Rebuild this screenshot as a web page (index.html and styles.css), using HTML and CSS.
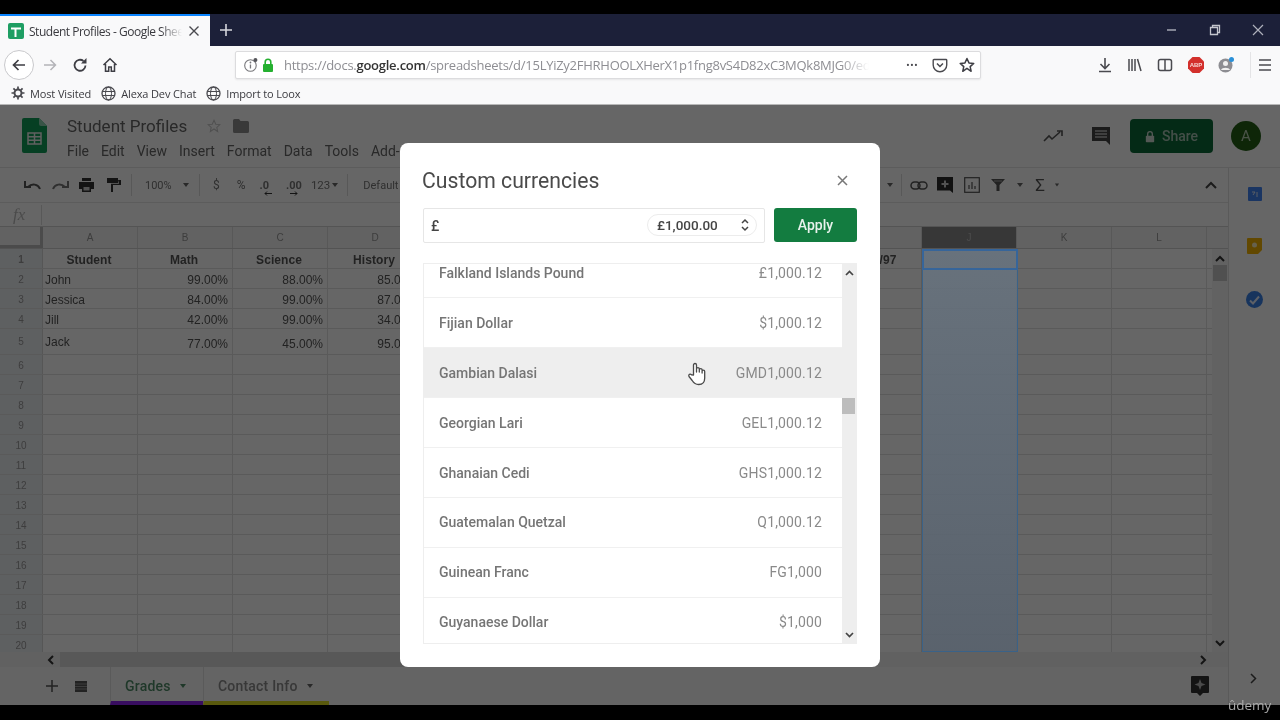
FILE: index.html
```html
<!DOCTYPE html>
<html lang="en">
<head>
<meta charset="utf-8">
<title>Student Profiles - Google Sheets</title>
<link rel="stylesheet" href="styles.css">
</head>
<body>
<div class="frame">
  <div class="letterbox-top"></div>

  <div class="tabstrip">
    <div class="tab">
      <svg class="favicon" width="16" height="16" viewBox="0 0 16 16"><rect width="16" height="16" rx="2" fill="#1e9e63"/><path d="M3 5.5h10M7.5 5.5V14" stroke="#fff" stroke-width="2" fill="none"/></svg>
      <span class="tab-title">Student Profiles - Google Sheets</span>
      <svg class="tab-close" width="12" height="12" viewBox="0 0 12 12"><path d="M1.5 1.5l9 9M10.5 1.5l-9 9" stroke="#4a4a4f" stroke-width="1.4"/></svg>
    </div>
    <svg class="newtab" width="14" height="14" viewBox="0 0 14 14"><path d="M7 1v12M1 7h12" stroke="#d5d6dc" stroke-width="1.6"/></svg>
    <div class="winctrls">
      <svg width="12" height="12" viewBox="0 0 12 12"><path d="M1 6h9" stroke="#aeb0bb" stroke-width="1.4"/></svg>
      <svg width="12" height="12" viewBox="0 0 12 12"><path d="M1.5 3.5h7v7h-7zM3.5 3.5v-2h7v7h-2" fill="none" stroke="#c4c5cd" stroke-width="1.3"/></svg>
      <svg width="12" height="12" viewBox="0 0 12 12"><path d="M1 1l10 10M11 1L1 11" stroke="#aeb0bb" stroke-width="1.2"/></svg>
    </div>
  </div>

  <div class="navbar">
    <div class="backbtn"><svg width="16" height="16" viewBox="0 0 16 16"><path d="M14 8H2.5M7.5 3L2.5 8l5 5" fill="none" stroke="#3e3e44" stroke-width="1.7"/></svg></div>
    <svg class="nav-fwd" width="16" height="16" viewBox="0 0 16 16"><path d="M2 8h11.5M8.5 3l5 5-5 5" fill="none" stroke="#b4b4b8" stroke-width="1.5"/></svg>
    <svg class="nav-reload" width="16" height="16" viewBox="0 0 16 16"><path d="M13.5 8.5A5.5 5.5 0 1 1 11.5 4" fill="none" stroke="#3e3e44" stroke-width="1.8"/><path d="M14.5 1v5.5H9z" fill="#3e3e44"/></svg>
    <svg class="nav-home" width="16" height="16" viewBox="0 0 16 16"><path d="M1.5 8L8 1.8 14.5 8M3.5 7v7.2h3.2V10h2.6v4.2h3.2V7" fill="none" stroke="#3e3e44" stroke-width="1.5"/></svg>
    <div class="urlbar">
      <svg width="16" height="16" viewBox="0 0 16 16"><circle cx="7.5" cy="8.5" r="5.8" fill="none" stroke="#77777b" stroke-width="1.1"/><path d="M7.5 7.5v4" stroke="#77777b" stroke-width="1.3"/><circle cx="7.5" cy="5.5" r=".9" fill="#77777b"/><circle cx="12.5" cy="3" r="2" fill="#55555a"/></svg>
      <svg class="lock" width="12" height="14" viewBox="0 0 12 14"><rect x="1" y="6" width="10" height="8" rx="1" fill="#25b030"/><path d="M3.2 6.5V4a2.8 2.8 0 0 1 5.6 0v2.5" fill="none" stroke="#25b030" stroke-width="1.6"/></svg>
      <div class="url"><span>https://docs.</span><b>google.com</b><span>/spreadsheets/d/15LYiZy2FHRHOOLXHerX1p1fng8vS4D82xC3MQk8MJG0/edit</span></div>
      <span class="dots">•••</span>
      <svg class="pocket" width="16" height="16" viewBox="0 0 16 16"><path d="M2 2.5h12a.8.8 0 0 1 .8.8V8A6.8 6.8 0 0 1 1.2 8V3.3A.8.8 0 0 1 2 2.5z" fill="none" stroke="#4a4a4f" stroke-width="1.4"/><path d="M5 6.5l3 3 3-3" fill="none" stroke="#4a4a4f" stroke-width="1.6"/></svg>
      <svg class="star" width="16" height="16" viewBox="0 0 16 16"><path d="M8 1.5l2 4.4 4.8.5-3.6 3.2 1 4.7L8 11.4l-4.2 2.9 1-4.7L1.2 6.4 6 5.9z" fill="none" stroke="#3e3e44" stroke-width="1.5" stroke-linejoin="round"/></svg>
    </div>
    <div class="nav-right">
      <svg width="16" height="16" viewBox="0 0 16 16"><path d="M8 1v10M3.5 7L8 11.5 12.5 7M2 14.5h12" fill="none" stroke="#4a4a4f" stroke-width="1.6"/></svg>
      <svg width="16" height="16" viewBox="0 0 16 16"><path d="M2 2v12M5 2v12M8 2v12M10.5 2l3.5 12" fill="none" stroke="#4a4a4f" stroke-width="1.5"/></svg>
      <svg width="16" height="16" viewBox="0 0 16 16"><rect x="1.5" y="2.5" width="13" height="11" rx="2" fill="none" stroke="#4a4a4f" stroke-width="1.5"/><path d="M8 3v10" stroke="#4a4a4f" stroke-width="1.5"/></svg>
      <svg width="18" height="18" viewBox="0 0 18 18"><path d="M5.5 1h7L17 5.5v7L12.500 17h-7L1 12.500v-7z" fill="#d3302c"/><text x="9" y="11" text-anchor="middle" font-family="Liberation Sans" font-size="6" font-weight="700" fill="#f6d6d4">ABP</text></svg>
      <svg class="acct" width="18" height="18" viewBox="0 0 18 18"><circle cx="8.500" cy="9.500" r="7" fill="#8d8d92"/><circle cx="8.500" cy="7.500" r="2.500" fill="#f0f0f0"/><path d="M4 14c1-3 8-3 9 0z" fill="#f0f0f0"/><circle cx="14.500" cy="3.500" r="2.500" fill="#2a90d8"/></svg>
      <span class="nav-sep"></span>
      <svg class="burger" width="16" height="16" viewBox="0 0 16 16"><path d="M2 3h12M2 8h12M2 13h12" stroke="#4a4a4f" stroke-width="1.6"/></svg>
    </div>
  </div>

  <div class="bookmarks">
    <div class="bookmark"><svg width="14" height="14" viewBox="0 0 14 14"><circle cx="7" cy="7" r="3.500" fill="none" stroke="#4a4a4f" stroke-width="2"/><path d="M7 .5v2.500M7 11v2.500M.5 7H3M11 7h2.500M2.400 2.400l1.800 1.800M9.800 9.800l1.800 1.800M11.600 2.400L9.800 4.200M4.200 9.800l-1.800 1.800" stroke="#4a4a4f" stroke-width="1.700"/></svg>Most Visited</div>
    <div class="bookmark"><svg width="15" height="15" viewBox="0 0 15 15"><circle cx="7.500" cy="7.500" r="6.500" fill="none" stroke="#4a4a4f" stroke-width="1.300"/><ellipse cx="7.500" cy="7.500" rx="3" ry="6.500" fill="none" stroke="#4a4a4f"/><path d="M1 5.500h13M1 9.500h13" stroke="#4a4a4f"/></svg>Alexa Dev Chat</div>
    <div class="bookmark"><svg width="15" height="15" viewBox="0 0 15 15"><circle cx="7.500" cy="7.500" r="6.500" fill="none" stroke="#4a4a4f" stroke-width="1.300"/><ellipse cx="7.500" cy="7.500" rx="3" ry="6.500" fill="none" stroke="#4a4a4f"/><path d="M1 5.500h13M1 9.500h13" stroke="#4a4a4f"/></svg>Import to Loox</div>
  </div>

  <div class="app">
    <header class="sheet-head">
      <svg class="sheet-logo" width="25" height="35" viewBox="0 0 25 35"><path d="M2 0h15l8 8v25a2 2 0 0 1-2 2H2a2 2 0 0 1-2-2V2a2 2 0 0 1 2-2z" fill="#0f9d58"/><path d="M17 0l8 8h-6a2 2 0 0 1-2-2z" fill="#8ed1b1"/><path d="M6 15h13v11H6zM6 18.700h13M6 22.300h13M12.500 15v11" fill="none" stroke="#f1f1f1" stroke-width="1.500"/></svg>
      <div class="doc-info">
        <div class="doc-title"><span>Student Profiles</span>
          <svg width="14" height="14" viewBox="0 0 16 16"><path d="M8 1.500l2 4.400 4.800.5-3.600 3.200 1 4.700L8 11.400l-4.200 2.900 1-4.700L1.200 6.400 6 5.900z" fill="none" stroke="#c8c8c8" stroke-width="1.200"/></svg>
          <svg width="16" height="14" viewBox="0 0 16 14"><path d="M0 1.500A1.500 1.500 0 0 1 1.500 0H6l1.500 2h7A1.500 1.500 0 0 1 16 3.500v9a1.500 1.500 0 0 1-1.500 1.500h-13A1.500 1.500 0 0 1 0 12.500z" fill="#909090"/></svg>
        </div>
        <nav class="menu"><span>File</span><span>Edit</span><span>View</span><span>Insert</span><span>Format</span><span>Data</span><span>Tools</span><span>Add-ons</span></nav>
      </div>
      <div class="head-right">
        <svg width="20" height="12" viewBox="0 0 20 12"><path d="M1 11l5-5 3 3 8-7M14 1h5v5" fill="none" stroke="#555" stroke-width="1.600"/></svg>
        <svg class="head-comment" width="20" height="20" viewBox="0 0 20 20"><path d="M1 1h18v18l-4-4H1z" fill="#444"/><path d="M4 5h12M4 8h12M4 11h12" stroke="#bbb" stroke-width="1.300"/></svg>
        <div class="share"><svg width="10" height="13" viewBox="0 0 12 14"><rect x="1" y="6" width="10" height="8" rx="1" fill="#cfdcd4"/><path d="M3.200 6.500V4a2.800 2.800 0 0 1 5.600 0v2.500" fill="none" stroke="#cfdcd4" stroke-width="1.600"/></svg>Share</div>
        <div class="avatar">A</div>
      </div>
    </header>

    <div class="sheet-body">
      <div class="sheet-main">
        <div class="toolbar">
          <svg class="ti" width="18" height="10" viewBox="0 0 18 10"><path d="M16 9c-2-5-8-6-12-2M1 1v6h6" fill="none" stroke="#555" stroke-width="2"/></svg>
          <svg class="ti" width="18" height="10" viewBox="0 0 18 10"><path d="M2 9c2-5 8-6 12-2M17 1v6h-6" fill="none" stroke="#777" stroke-width="2"/></svg>
          <svg class="ti" width="15" height="14" viewBox="0 0 15 14"><path d="M3 0h9v3H3zM0 4h15v7h-3v3H3v-3H0z" fill="#333"/><path d="M4.500 9h6v3.500h-6z" fill="#ccc"/></svg>
          <svg class="ti" width="14" height="14" viewBox="0 0 14 14"><path d="M0 0h11v5H0zM11 2h3v5H6v7H4V5.800h8z" fill="#333"/></svg>
          <span class="tsep s1"></span>
          <span class="tt zoom">100%</span><span class="caret"></span>
          <span class="tsep s2"></span>
          <span class="tt t-dollar">$</span><span class="tt t-pct">%</span>
          <span class="tt t-dec">.0<svg class="dec-arrow" width="10" height="5" viewBox="0 0 10 5"><path d="M9 2.500H2M4 .5l-2 2 2 2" fill="none" stroke="#333"/></svg></span>
          <span class="tt t-dec2">.00<svg class="dec-arrow" width="10" height="5" viewBox="0 0 10 5"><path d="M1 2.500h7M6 .5l2 2-2 2" fill="none" stroke="#333"/></svg></span>
          <span class="tt t-123">123</span><span class="caret c2"></span>
          <span class="tsep s3"></span>
          <span class="tt t-font">Default</span>
          <span class="caret c3"></span>
          <span class="tsep s4"></span>
          <svg class="ti r1" width="18" height="9" viewBox="0 0 18 9"><rect x="1" y="1" width="9" height="7" rx="3.500" fill="none" stroke="#555" stroke-width="1.500"/><rect x="8" y="1" width="9" height="7" rx="3.500" fill="none" stroke="#555" stroke-width="1.500"/></svg>
          <svg class="ti r2" width="16" height="17" viewBox="0 0 16 17"><path d="M0 0h16v16l-3-2.500H0z" fill="#2c2c2c"/><path d="M8 3.500v7M4.500 7h7" stroke="#ccc" stroke-width="2"/></svg>
          <svg class="ti r3" width="16" height="16" viewBox="0 0 16 16"><rect x=".7" y=".7" width="14.600" height="14.600" fill="none" stroke="#555" stroke-width="1.200"/><path d="M5 12V8M8 12V5M11 12V9" stroke="#555" stroke-width="1.200"/></svg>
          <svg class="ti r4" width="14" height="12" viewBox="0 0 14 12"><path d="M0 0h14L8.500 6v6h-3V6z" fill="#555"/><path d="M3 2h8" stroke="#aaa"/></svg>
          <span class="caret c4"></span>
          <span class="tt t-sum">Σ</span>
          <span class="caret c5"></span>
          <svg class="collapse" width="12" height="8" viewBox="0 0 12 8"><path d="M1 7l5-5 5 5" fill="none" stroke="#444" stroke-width="2"/></svg>
        </div>
        <div class="formula"><i>fx</i></div>

        <div class="grid-wrap">
          <div class="cells">
            <div class="col-rules"><b></b><b></b><b></b><b></b><b></b><b></b><b></b><b></b><b></b><b></b><b></b><b></b><b></b></div>
            <div class="row colhead"><div class="corner"></div><div>A</div><div>B</div><div>C</div><div>D</div><div>E</div><div>F</div><div>G</div><div>H</div><div>I</div><div class="col-on">J</div><div>K</div><div>L</div></div>
            <div class="row bold"><div class="rn">1</div><div>Student</div><div>Math</div><div>Science</div><div>History</div><div></div><div></div><div></div><div></div><div class="date-head">11/1/97</div></div>
            <div class="row"><div class="rn">2</div><div class="tl">John</div><div>99.00%</div><div>88.00%</div><div>85.00%</div></div>
            <div class="row"><div class="rn">3</div><div class="tl">Jessica</div><div>84.00%</div><div>99.00%</div><div>87.00%</div></div>
            <div class="row"><div class="rn">4</div><div class="tl">Jill</div><div>42.00%</div><div>99.00%</div><div>34.00%</div></div>
            <div class="row tall"><div class="rn">5</div><div class="tl">Jack</div><div>77.00%</div><div>45.00%</div><div>95.00%</div></div>
            <div class="row"><div class="rn">6</div></div>
            <div class="row"><div class="rn">7</div></div>
            <div class="row"><div class="rn">8</div></div>
            <div class="row"><div class="rn">9</div></div>
            <div class="row"><div class="rn">10</div></div>
            <div class="row"><div class="rn">11</div></div>
            <div class="row"><div class="rn">12</div></div>
            <div class="row"><div class="rn">13</div></div>
            <div class="row"><div class="rn">14</div></div>
            <div class="row"><div class="rn">15</div></div>
            <div class="row"><div class="rn">16</div></div>
            <div class="row"><div class="rn">17</div></div>
            <div class="row"><div class="rn">18</div></div>
            <div class="row"><div class="rn">19</div></div>
            <div class="row"><div class="rn">20</div></div>
          </div>
          <div class="vscroll">
            <svg width="10" height="7" viewBox="0 0 10 7"><path d="M1 6l4-4 4 4" fill="none" stroke="#333" stroke-width="2"/></svg>
            <div class="vthumb"></div>
            <svg class="vdown" width="10" height="7" viewBox="0 0 10 7"><path d="M1 1l4 4 4-4" fill="none" stroke="#333" stroke-width="2"/></svg>
          </div>
        </div>

        <div class="hscroll">
          <svg width="7" height="10" viewBox="0 0 7 10"><path d="M6 1L2 5l4 4" fill="none" stroke="#333" stroke-width="2"/></svg>
          <div class="hthumb"></div>
          <svg width="7" height="10" viewBox="0 0 7 10"><path d="M1 1l4 4-4 4" fill="none" stroke="#333" stroke-width="2"/></svg>
        </div>

        <div class="sheet-tabs">
          <svg class="add" width="12" height="12" viewBox="0 0 12 12"><path d="M6 0v12M0 6h12" stroke="#555" stroke-width="1.500"/></svg>
          <svg class="all" width="12" height="11" viewBox="0 0 12 11"><path d="M0 0h12v11H0z" fill="#555"/><path d="M0 3h12M0 5.500h12M0 8h12" stroke="#aaa" stroke-width=".8"/></svg>
          <div class="stab grades">Grades<span class="caret g"></span></div>
          <div class="stab contact">Contact Info<span class="caret"></span></div>
          <svg class="explore" width="18" height="20" viewBox="0 0 18 20"><path d="M1 0h16a1 1 0 0 1 1 1v15a1 1 0 0 1-1 1h-5l-3 3-3-3H1a1 1 0 0 1-1-1V1a1 1 0 0 1 1-1z" fill="#333"/><path d="M9 3l1.500 4L14.500 8.500 10.500 10 9 14 7.500 10 3.500 8.500 7.500 7z" fill="#bbb"/></svg>
        </div>
      </div>

      <aside class="side">
        <svg width="14" height="14" viewBox="0 0 14 14"><rect width="14" height="14" rx="1" fill="#4285f4"/><path d="M4 5h3L5 8M9 5v5" stroke="#dfe9fb" fill="none"/></svg>
        <svg width="15" height="16" viewBox="0 0 15 16"><path d="M1 0h13a1 1 0 0 1 1 1v11l-4 4H1a1 1 0 0 1-1-1V1a1 1 0 0 1 1-1z" fill="#f4b400"/><circle cx="7.500" cy="7" r="2.500" fill="#fff2c0"/></svg>
        <svg width="17" height="17" viewBox="0 0 17 17"><circle cx="8.500" cy="8.500" r="8.500" fill="#3b82e8"/><path d="M4 9.500l3 3 6-7" fill="none" stroke="#e8f0fe" stroke-width="2"/></svg>
        <svg class="side-toggle" width="7" height="11" viewBox="0 0 7 11"><path d="M1 1l4.500 4.500L1 10" fill="none" stroke="#444" stroke-width="1.500"/></svg>
      </aside>
    </div>

    <div class="dim"></div>
    <div class="selection"><div class="sel-cell"></div></div>

    <section class="modal">
      <div class="modal-head"><h1>Custom currencies</h1>
        <svg width="11" height="11" viewBox="0 0 11 11"><path d="M1 1l9 9M10 1l-9 9" stroke="#777" stroke-width="1.500"/></svg>
      </div>
      <div class="modal-form">
        <div class="cur-input"><span>£</span>
          <div class="pill"><span>£1,000.00</span><svg width="8" height="14" viewBox="0 0 8 14"><path d="M1 5l3-3 3 3M1 9l3 3 3-3" fill="none" stroke="#444" stroke-width="1.500"/></svg></div>
        </div>
        <button class="apply">Apply</button>
      </div>
      <div class="list-box">
        <div class="list">
          <div class="item"><span>Falkland Islands Pound</span><em>£1,000.12</em></div>
          <div class="item"><span>Fijian Dollar</span><em>$1,000.12</em></div>
          <div class="item hover"><span>Gambian Dalasi</span><em>GMD1,000.12</em></div>
          <div class="item"><span>Georgian Lari</span><em>GEL1,000.12</em></div>
          <div class="item"><span>Ghanaian Cedi</span><em>GHS1,000.12</em></div>
          <div class="item"><span>Guatemalan Quetzal</span><em>Q1,000.12</em></div>
          <div class="item"><span>Guinean Franc</span><em>FG1,000</em></div>
          <div class="item"><span>Guyanaese Dollar</span><em>$1,000</em></div>
        </div>
        <div class="list-scroll">
          <svg class="lu" width="9" height="6" viewBox="0 0 9 6"><path d="M1 5l3.500-3.500L8 5" fill="none" stroke="#444" stroke-width="1.700"/></svg>
          <div class="list-thumb"></div>
          <svg class="ld" width="9" height="6" viewBox="0 0 9 6"><path d="M1 1l3.500 3.500L8 1" fill="none" stroke="#444" stroke-width="1.700"/></svg>
        </div>
      </div>
    </section>

    <svg class="hand" width="20" height="24" viewBox="0 0 20 24"><path d="M6.500 13V3a1.500 1.500 0 0 1 3 0v7l0-3a1.400 1.400 0 0 1 2.800 0v3-2a1.400 1.400 0 0 1 2.800 0v3-1.500a1.300 1.300 0 0 1 2.600 0V16c0 4-2 6.500-6 6.500-3.500 0-5-1.500-6.500-4L2 14.500c-1-2 1.200-3 2.500-1.700z" fill="#fff" stroke="#4a4a4a" stroke-width="1.300" stroke-linejoin="round"/></svg>
  </div>

  <div class="letterbox-bottom"></div>
  <div class="watermark">ûdemy</div>
</div>
</body>
</html>
```
FILE: styles.css
```css
* { box-sizing: border-box; }
html, body { margin: 0; padding: 0; width: 1280px; height: 720px; overflow: hidden; background: #000; }
body { font-family: Roboto, "Liberation Sans", sans-serif; }
.frame { position: relative; width: 1280px; height: 720px; display: flex; flex-direction: column; background: #000; overflow: hidden; filter: blur(.7px); }
.letterbox-top { height: 14px; flex: none; }
.letterbox-bottom { height: 15px; flex: none; }

/* browser tabs */
.tabstrip { height: 32px; flex: none; background: #1c2039; display: flex; align-items: center; position: relative; }
.tab { width: 210px; height: 32px; background: #f9f9fa; border-top: 2px solid #0a84ff; display: flex; align-items: center; padding: 0 10px 0 8px; flex: none; }
.favicon { flex: none; }
.tab-title { margin-left: 5px; width: 153px; font: 12px "Open Sans", sans-serif; letter-spacing: -.48px; color: #3a3a3f; white-space: nowrap; overflow: hidden; -webkit-mask-image: linear-gradient(90deg, #000 86%, transparent); mask-image: linear-gradient(90deg, #000 86%, transparent); }
.tab-close { margin-left: 6px; flex: none; }
.newtab { margin-left: 9px; }
.winctrls { margin-left: auto; display: flex; gap: 31px; padding-right: 16px; }

/* navigation */
.navbar { height: 37px; flex: none; background: #f9f9fa; display: flex; align-items: center; padding: 1px 0 0 4px; }
.backbtn { width: 30px; height: 30px; border-radius: 50%; border: 1px solid #c9c9cc; background: #fff; display: flex; align-items: center; justify-content: center; flex: none; }
.nav-fwd { margin-left: 8px; flex: none; }
.nav-reload { margin-left: 14px; flex: none; }
.nav-home { margin-left: 14px; flex: none; }
.urlbar { margin-left: 117px; width: 746px; height: 28px; background: #fff; border: 1px solid #dcdcde; border-radius: 2px; box-shadow: 0 1px 2px rgba(0,0,0,.08); display: flex; align-items: center; padding: 0 5px 0 7px; flex: none; }
.lock { margin-left: 3px; flex: none; }
.url { margin-left: 10px; width: 588px; font: 13px "Open Sans", sans-serif; letter-spacing: -.26px; color: #8e8e93; white-space: nowrap; overflow: hidden; -webkit-mask-image: linear-gradient(90deg, #000 95%, transparent); mask-image: linear-gradient(90deg, #000 95%, transparent); }
.url b { color: #333; font-weight: 600; }
.dots { margin-left: 37px; width: 16px; font-size: 10px; letter-spacing: .6px; color: #4a4a4f; white-space: nowrap; }
.pocket { margin-left: 10px; }
.star { margin-left: 11px; }
.nav-right { margin-left: 116px; display: flex; align-items: center; gap: 14px; }
.acct { margin-left: -2px; }
.nav-sep { width: 1px; height: 26px; background: #e4e4e6; margin-left: 1px; }
.burger { margin-left: -8px; }
.bookmarks { height: 22px; flex: none; background: #f9f9fa; border-bottom: 1px solid #b8b8b8; display: flex; align-items: center; padding: 0 0 1px 11px; gap: 10px; font: 11px "Open Sans", sans-serif; letter-spacing: -.13px; color: #3a3a3f; }
.bookmark { display: flex; align-items: center; gap: 5px; }

/* sheets app */
.app { position: relative; height: 600px; flex: none; background: #fff; display: flex; flex-direction: column; }
.sheet-head { height: 63px; flex: none; display: flex; border-bottom: 1px solid #e6e6e6; padding-left: 22px; }
.sheet-logo { margin-top: 13px; flex: none; }
.doc-info { margin-left: 20px; padding-top: 10px; }
.doc-title { display: flex; align-items: center; height: 22px; font-size: 17px; color: #666; }
.doc-title svg:first-of-type { margin-left: 20px; }
.doc-title svg:last-of-type { margin-left: 12px; }
.menu { display: flex; gap: 12px; margin-top: 6px; font-size: 14px; color: #666; }
.head-right { margin-left: auto; display: flex; align-items: center; padding: 0 19px 0 0; height: 62px; }
.head-comment { margin-left: 28px; margin-top: -1px; }
.share { margin-left: 19px; width: 83px; height: 34px; background: #0c6a37; border-radius: 4px; color: #a8c4b4; font-size: 14px; font-weight: 500; display: flex; align-items: center; justify-content: center; gap: 7px; }
.avatar { margin-left: 18px; width: 30px; height: 30px; border-radius: 50%; background: #235f16; color: #b9d0b2; font-size: 15px; display: flex; align-items: center; justify-content: center; }
.sheet-body { flex: 1; display: flex; min-height: 0; }
.sheet-main { width: 1228px; flex: none; display: flex; flex-direction: column; }
.side { flex: 1; border-left: 1px solid #e0e0e0; position: relative; display: flex; flex-direction: column; align-items: center; padding-top: 19px; gap: 37px; }
.side-toggle { position: absolute; top: 505px; left: 21px; }

.toolbar { height: 35px; flex: none; display: flex; align-items: center; border-bottom: 1px solid #e6e6e6; position: relative; font-size: 11px; color: #777; padding-left: 24px; }
.ti { flex: none; }
.toolbar > .ti:nth-child(2) { margin-left: 9px; }
.toolbar > .ti:nth-child(3) { margin-left: 10px; }
.toolbar > .ti:nth-child(4) { margin-left: 13px; }
.tsep { width: 1px; height: 22px; background: #ddd; flex: none; }
.tt { flex: none; }
.caret { display: inline-block; width: 0; height: 0; border-left: 3.500px solid transparent; border-right: 3.500px solid transparent; border-top: 4px solid #666; flex: none; }
.s1 { margin-left: 10px; }
.zoom { margin-left: 13px; width: 38px; }
.s2 { margin-left: 10px; }
.t-dollar { margin-left: 13px; font-size: 12px; }
.t-pct { margin-left: 17px; font-size: 12px; }
.t-dec { margin-left: 14px; font-weight: 700; position: relative; }
.t-dec2 { margin-left: 17px; font-weight: 700; position: relative; }
.dec-arrow { position: absolute; left: 3px; top: 12px; }
.t-123 { margin-left: 9px; font-size: 11.500px; }
.c2 { margin-left: 2px; }
.s3 { margin-left: 9px; }
.t-font { margin-left: 15px; width: 498px; white-space: nowrap; overflow: hidden; }
.c3 { margin-left: 26px; }
.s4 { margin-left: 8px; }
.r1 { margin-left: 8px; }
.r2 { margin-left: 9px; }
.r3 { margin-left: 11px; }
.r4 { margin-left: 11px; }
.c4 { margin-left: 12px; }
.t-sum { margin-left: 12px; font-size: 17px; color: #555; }
.c5 { margin-left: 9px; transform: scale(.7); }
.collapse { margin-left: 145px; }
.formula { height: 24px; flex: none; border-bottom: 1px solid #d2d2d2; position: relative; padding-left: 13px; font: italic 17px "Liberation Serif", serif; color: #bbb; display: flex; align-items: center; }
.formula i { width: 29px; height: 20px; border-right: 1px solid #ddd; line-height: 19px; }

.grid-wrap { flex: 1; display: flex; min-height: 0; }
.cells { position: relative; flex: none; width: 1212px; overflow: hidden; }
.col-rules, .row { display: grid; grid-template-columns: 43px 95px 95px 95px 95px 119px 95px 95px 95px 95px 95px 95px 95px; }
.col-rules { position: absolute; inset: 0; }
.col-rules b { border-right: 1px solid #e0e0e0; }
.row { position: relative; height: 20px; border-bottom: 1px solid #e0e0e0; font: 12px/22px "Liberation Sans", sans-serif; color: #555; text-align: right; }
.row > div { padding: 0 5px 0 2px; white-space: nowrap; overflow: hidden; }
.row .tl { text-align: left; }
.row .rn { background: #eceff3; text-align: center; font-size: 10px; line-height: 21px; color: #999; border-right: 1px solid #d6d6d6; padding: 0; }
.bold { font-weight: 700; letter-spacing: .06px; }
.bold > div { text-align: center; }
.bold .date-head { padding-left: 9px; }
.tall { height: 26px; line-height: 31px; }
.tall .tl { line-height: 27px; }
.tall .rn { line-height: 26px; }
.colhead { height: 22px; background: #f5f5f5; border-bottom: 1px solid #cfcfcf; line-height: 22px; font-size: 10px; color: #999; }
.colhead > div { text-align: center; border-right: 1px solid #dcdcdc; padding: 0; }
.colhead .corner { background: #f5f5f5; border-right: 3px solid #bcbcbc; border-bottom: 3px solid #bcbcbc; }
.colhead .col-on { background: #8a8a8a; color: #bbb; }
.selection { position: absolute; left: 922px; top: 144px; width: 96px; height: 403px; background: linear-gradient(rgba(104,116,128,.85), rgba(88,98,110,.85)); border: 1px solid #3a6288; border-top: 0; }
.sel-cell { height: 21px; border: 2px solid #36659a; margin: 0 -1px; }
.vscroll { flex: 1; background: linear-gradient(#f5f5f5 21px, #cfcfcf 21px, #cfcfcf 22px, #f5f5f5 22px); display: flex; flex-direction: column; align-items: center; padding-top: 28px; }
.vthumb { width: 14px; height: 16px; background: #c9c9c9; margin-top: 3px; }
.vdown { margin-top: auto; margin-bottom: 5px; }
.hscroll { height: 15px; flex: none; background: #f2f2f2; display: flex; align-items: center; padding: 0 21px 0 47px; }
.hscroll svg:last-child { margin-left: auto; }
.hthumb { width: 560px; height: 15px; background: #dcdcdc; margin-left: 6px; }
.sheet-tabs { height: 38px; flex: none; display: flex; background: #f9f9f9; align-items: center; padding-left: 46px; font-size: 14px; }
.all { margin-left: 17px; }
.stab { height: 38px; display: flex; align-items: center; gap: 9px; padding: 4px 15px 0 14px; font-weight: 500; color: #8c8c8c; border-left: 1px solid #e0e0e0; white-space: nowrap; border-bottom: 4px solid #dede22; letter-spacing: .2px; }
.grades { margin-left: 23px; width: 93px; color: #4f8c68; border-bottom-color: #8c22f0; background: #fbfbfb; }
.contact { width: 126px; }
.caret.g { border-top-color: #4f8c68; }
.explore { margin-left: auto; margin-right: 19px; }

.dim { position: absolute; inset: 0; background: rgba(0,0,0,.6); }

/* dialog */
.modal { position: absolute; left: 400px; top: 38px; width: 480px; height: 524px; background: #fff; border-radius: 8px; padding: 0 23px; display: flex; flex-direction: column; }
.modal-head { height: 65px; flex: none; display: flex; align-items: center; justify-content: space-between; padding: 9px 9px 0 0; }
.modal-head h1 { margin: 0 0 0 -1px; font: 400 21.200px Roboto, sans-serif; color: #4a4a4a; }
.modal-form { display: flex; flex: none; gap: 9px; height: 35px; }
.cur-input { width: 342px; height: 35px; border: 1px solid #e6e6e6; border-radius: 2px; display: flex; align-items: center; justify-content: space-between; padding: 0 7px; font-size: 14px; font-weight: 500; color: #444; }
.pill { width: 110px; height: 22px; margin-top: -1px; border: 1px solid #ececec; border-radius: 11px; display: flex; align-items: center; justify-content: space-between; padding: 0 7px 0 9px; font-size: 13.500px; }
.apply { width: 83px; height: 34px; border: 0; border-radius: 3px; background: #137c40; color: #e8f2ec; font: 500 14px Roboto, sans-serif; padding: 0; }
.list-box { margin-top: 20px; height: 381px; flex: none; display: flex; border: 1px solid #eee; border-width: 1px 0 1px 1px; overflow: hidden; }
.list { width: 418px; flex: none; margin-top: -15.500px; }
.item { height: 49.900px; display: flex; align-items: center; justify-content: space-between; padding: 0 20px 0 15px; font-size: 14px; border-bottom: 1px solid #f0f0f0; color: #757575; }
.item span { font-weight: 500; }
.item em { font-style: normal; color: #8a8a8a; letter-spacing: .15px; }
.item.hover { background: #eee; }
.list-scroll { flex: 1; background: #eee; position: relative; }
.list-thumb { position: absolute; top: 134px; left: 0; width: 13px; height: 16px; background: #bdbdbd; }
.lu { position: absolute; top: 6px; left: 3px; }
.ld { position: absolute; bottom: 5px; left: 3px; }
.hand { position: absolute; left: 687px; top: 257px; }
.watermark { position: absolute; left: 1228px; top: 696px; font: 13.500px/18px "Open Sans", sans-serif; color: #aaa; }
```
